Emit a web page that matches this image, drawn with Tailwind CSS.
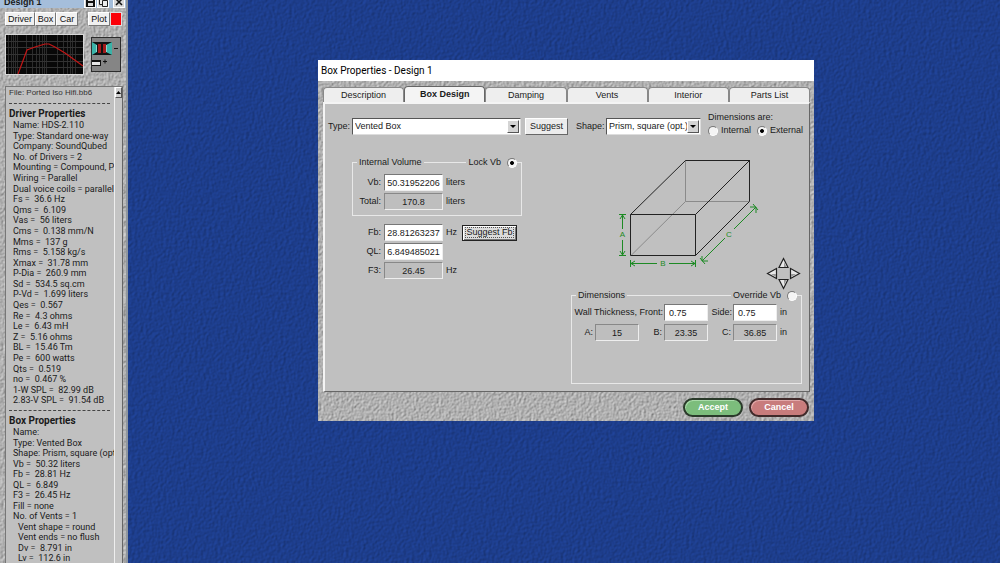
<!DOCTYPE html>
<html lang="en">
<head>
    <meta charset="UTF-8">
    <meta name="viewport" content="width=device-width, initial-scale=1.0">
    <title>Box Properties - Design 1</title>
    <script src="https://cdn.jsdelivr.net/npm/@tailwindcss/browser@4"></script>
</head>
<body class="relative flex h-screen overflow-hidden bg-[#1c3c88] font-['Liberation_Sans',Arial,sans-serif] text-[9px] leading-[11px] text-[#1a1a1a]">
    <!-- Texture filters -->
    <svg class="absolute w-0 h-0" aria-hidden="true">
        <filter id="stone" x="0" y="0" width="100%" height="100%" color-interpolation-filters="sRGB">
            <feTurbulence type="fractalNoise" baseFrequency="0.4" numOctaves="3" seed="4"/>
            <feDiffuseLighting surfaceScale="0.6" diffuseConstant="1" lighting-color="#e6e6e6">
                <feDistantLight azimuth="215" elevation="50"/>
            </feDiffuseLighting>
        </filter>
        <filter id="leather" x="0" y="0" width="100%" height="100%" color-interpolation-filters="sRGB">
            <feTurbulence type="fractalNoise" baseFrequency="0.35" numOctaves="2" seed="9"/>
            <feDiffuseLighting surfaceScale="0.4" diffuseConstant="1" lighting-color="#2650b6">
                <feDistantLight azimuth="215" elevation="50"/>
            </feDiffuseLighting>
        </filter>
    </svg>

    <!-- Design sidebar -->
    <aside class="relative z-10 w-[128px] shrink-0 h-full flex flex-col bg-[#b0b0b0] border-r-2 border-[#8f969f] overflow-hidden">
        <svg class="absolute inset-0 w-full h-full" aria-hidden="true"><rect width="100%" height="100%" filter="url(#stone)"/></svg>

        <header class="relative h-[8px] shrink-0 flex items-end justify-between pl-1 pr-px bg-[#a5bedb]">
            <h1 class="font-bold text-[9px] leading-[11px]">Design 1</h1>
            <div class="flex gap-px">
                <button aria-label="Save" class="w-[12px] h-[12px] bg-[#d8d8d8] border border-white flex items-center justify-center">
                    <svg class="w-[9px] h-[9px]" viewBox="0 0 9 9"><path d="M0 0h8l1 1v8H0z" fill="#111"/><path d="M2 0h5v3H2zM2 5h5v3H2z" fill="#ddd"/></svg>
                </button>
                <button aria-label="Copy" class="w-[12px] h-[12px] bg-[#d8d8d8] border border-white flex items-center justify-center">
                    <svg class="w-[9px] h-[9px]" viewBox="0 0 9 9" fill="#eee" stroke="#222"><path d="M.5.5h4v6h-4z"/><path d="M3.5 2.5h5v6h-5z"/></svg>
                </button>
                <button aria-label="Close" class="w-[12px] h-[12px] ml-[3px] bg-[#d8d8d8] border border-white flex items-center justify-center">
                    <svg class="w-[8px] h-[8px]" viewBox="0 0 8 8" stroke="#111" stroke-width="1.5"><path d="M1 1l6 6M7 1L1 7"/></svg>
                </button>
            </div>
        </header>

        <div class="relative flex mt-1 ml-[5px] text-[#111]">
            <button class="w-[30px] h-[14px] bg-[#f0f0f0] border border-t-white border-l-white border-r-[#777] border-b-[#777]">Driver</button>
            <button class="w-[21px] h-[14px] bg-[#f0f0f0] border border-t-white border-l-white border-r-[#777] border-b-[#777]">Box</button>
            <button class="w-[22px] h-[14px] bg-[#f0f0f0] border border-t-white border-l-white border-r-[#777] border-b-[#777]">Car</button>
            <button class="w-[22px] h-[14px] ml-2.5 bg-[#f0f0f0] border border-t-white border-l-white border-r-[#777] border-b-[#777]">Plot</button>
            <button aria-label="Plot color" class="w-[12px] h-[14px] bg-[#fb0008] border border-[#ddd]"></button>
        </div>

        <div class="relative flex items-center gap-[7px] mt-2 ml-[5px]">
            <svg class="w-[79px] h-[41px]" viewBox="0 0 79 41">
                <rect width="79" height="41" fill="#d8d8d8"/>
                <rect x="1" y="1" width="77" height="39" fill="#080808"/>
                <path d="M3.500 1v39M6.500 1v39M8.500 1v39M10.500 1v39M12.500 1v39M21.500 1v39M27.500 1v39M31.500 1v39M34.500 1v39M37.500 1v39M39.500 1v39M41.500 1v39M52.500 1v39M58.500 1v39M62.500 1v39M65.500 1v39M67.500 1v39M70.500 1v39" stroke="#2c2c2c"/>
                <path d="M1 7.500h77M1 13.500h77M1 20.500h77M1 27.500h77M1 33.500h77" stroke="#333"/>
                <path d="M13 40L22 16l8-3 10-3h4l6 3 10 6 18 13" fill="none" stroke="#c41616" stroke-width="1.200"/>
            </svg>
            <svg class="w-[30px] h-[35px]" viewBox="0 0 30 35">
                <rect x=".5" y=".5" width="29" height="34" fill="#858585" stroke="#2c2c2c"/>
                <path d="M1 5h20v13H1z" fill="#111"/>
                <path d="M1 5l5 3v7l-5 3zM21 5l-6 3v7l6 3z" fill="#3bb3a8"/>
                <path d="M5 8h1v7H5zM15 8h1v7h-1z" fill="#8fd6cf"/>
                <path d="M7 7h3v9H7zM12 7h3v9h-3z" fill="#a11a1a"/>
                <path d="M1 23h9v6H1z" fill="#111"/>
                <path d="M1 25h8v3H1z" fill="#e6e6e6"/>
                <path d="M23 11.500h4M12 24.500h4M14 22.500v4" stroke="#111"/>
            </svg>
        </div>

        <div class="relative flex-1 min-h-0 flex mt-[11px] ml-[5px] mr-[3px] bg-[#c0c0c0] border-t border-l border-[#777]">
            <div class="flex-1 min-w-0 pl-[3px] overflow-hidden whitespace-nowrap font-[Roboto,'Liberation_Sans',sans-serif]">
                <p class="text-[8px] leading-[12px] text-[#333] font-['Liberation_Sans',Arial,sans-serif]">File: Ported Iso Hifi.bb6</p>
                <div class="border-t border-dashed border-[#444] mt-1 mr-1"></div>
                <h2 class="mt-1 text-[10px] leading-[12px] font-bold">Driver Properties</h2>
                <ul class="grid auto-rows-fr h-[286px] pl-[4px] leading-[10px] whitespace-pre">
                    <li>Name: HDS-2.110</li>
                    <li>Type: Standard one-way</li>
                    <li>Company: SoundQubed</li>
                    <li>No. of Drivers = 2</li>
                    <li>Mounting = Compound, P</li>
                    <li>Wiring = Parallel</li>
                    <li>Dual voice coils = parallel</li>
                    <li>Fs =  36.6 Hz</li>
                    <li>Qms =  6.109</li>
                    <li>Vas =  56 liters</li>
                    <li>Cms =  0.138 mm/N</li>
                    <li>Mms =  137 g</li>
                    <li>Rms =  5.158 kg/s</li>
                    <li>Xmax =  31.78 mm</li>
                    <li>P-Dia =  260.9 mm</li>
                    <li>Sd =  534.5 sq.cm</li>
                    <li>P-Vd =  1.699 liters</li>
                    <li>Qes =  0.567</li>
                    <li>Re =  4.3 ohms</li>
                    <li>Le =  6.43 mH</li>
                    <li>Z =  5.16 ohms</li>
                    <li>BL =  15.46 Tm</li>
                    <li>Pe =  600 watts</li>
                    <li>Qts =  0.519</li>
                    <li>no =  0.467 %</li>
                    <li>1-W SPL =  82.99 dB</li>
                    <li>2.83-V SPL =  91.54 dB</li>
                </ul>
                <div class="border-t border-dashed border-[#444] mt-1 mr-1"></div>
                <h2 class="mt-1 text-[10px] leading-[12px] font-bold">Box Properties</h2>
                <ul class="grid auto-rows-fr h-[137px] pl-[4px] leading-[10px] whitespace-pre">
                    <li>Name:</li>
                    <li>Type: Vented Box</li>
                    <li>Shape: Prism, square (opt</li>
                    <li>Vb =  50.32 liters</li>
                    <li>Fb =  28.81 Hz</li>
                    <li>QL =  6.849</li>
                    <li>F3 =  26.45 Hz</li>
                    <li>Fill = none</li>
                    <li>No. of Vents = 1</li>
                    <li class="pl-[5px]">Vent shape = round</li>
                    <li class="pl-[5px]">Vent ends = no flush</li>
                    <li class="pl-[5px]">Dv =  8.791 in</li>
                    <li class="pl-[5px]">Lv =  112.6 in</li>
                </ul>
            </div>
            <div class="w-[9px] shrink-0 bg-[#c4c4c4] border-l border-[#eee] border-r border-r-[#666]">
                <button aria-label="Scroll up" class="w-full h-[11px] bg-[#d0d0d0] border border-t-white border-l-white border-r-[#555] border-b-[#555] flex items-center justify-center">
                    <svg class="w-[5px] h-[3px]" viewBox="0 0 5 3"><path d="M0 3L2.500 0 5 3z" fill="#000"/></svg>
                </button>
            </div>
        </div>
    </aside>

    <!-- Desktop -->
    <main class="relative flex-1">
        <svg class="absolute inset-0 w-full h-full" aria-hidden="true"><rect width="100%" height="100%" filter="url(#leather)"/></svg>

        <!-- Box properties window -->
        <section class="absolute left-[190px] top-[60px] w-[496px] bg-[#b0b0b0]">
            <h2 class="relative z-10 h-[21px] pl-[3px] bg-white font-[Roboto,'Open_Sans',sans-serif] text-[10px] leading-[21px] text-black">Box Properties - Design 1</h2>
            <svg class="absolute inset-0 w-full h-full" aria-hidden="true"><rect width="100%" height="100%" filter="url(#stone)"/></svg>

            <div class="relative pl-[5px] pr-1 pt-[5px] pb-1">
                <nav class="flex items-end h-[16px] text-center">
                    <button class="flex-1 h-[15px] bg-[#eee] border border-b-0 border-[#888] rounded-t-[4px]">Description</button>
                    <button class="flex-1 h-[16px] bg-[#f4f4f4] border border-b-0 border-[#666] rounded-t-[4px] font-bold">Box Design</button>
                    <button class="flex-1 h-[15px] bg-[#eee] border border-b-0 border-[#888] rounded-t-[4px]">Damping</button>
                    <button class="flex-1 h-[15px] bg-[#eee] border border-b-0 border-[#888] rounded-t-[4px]">Vents</button>
                    <button class="flex-1 h-[15px] bg-[#eee] border border-b-0 border-[#888] rounded-t-[4px]">Interior</button>
                    <button class="flex-1 h-[15px] bg-[#eee] border border-b-0 border-[#888] rounded-t-[4px]">Parts List</button>
                </nav>

                <div class="bg-[#c0c0c0] border-l-2 border-t-2 border-[#f4f4f4] border-r border-b border-r-[#666] border-b-[#666]">
                    <!-- Type and shape -->
                    <div class="flex items-center h-[36px] pl-[3px] pt-2">
                        <label for="type" class="w-[24px]">Type:</label>
                        <div class="relative w-[169px] h-[17px]">
                            <select id="type" class="appearance-none w-full h-full pl-[2px] bg-white border border-t-[#555] border-l-[#555] border-r-[#ddd] border-b-[#ddd]"><option>Vented Box</option></select>
                            <span class="absolute right-[2px] top-[2px] w-[12px] h-[13px] bg-[#d4d4d4] border border-t-white border-l-white border-r-[#555] border-b-[#555] flex items-center justify-center pointer-events-none">
                                <svg class="w-[6px] h-[3px]" viewBox="0 0 6 3"><path d="M0 0h6L3 3z"/></svg>
                            </span>
                        </div>
                        <button class="w-[43px] h-[17px] ml-1 bg-[#ececec] border border-t-white border-l-white border-r-[#666] border-b-[#666]">Suggest</button>
                        <label for="shape" class="w-[30px] ml-2">Shape:</label>
                        <div class="relative w-[95px] h-[17px]">
                            <select id="shape" class="appearance-none w-full h-full pl-[2px] bg-white border border-t-[#555] border-l-[#555] border-r-[#ddd] border-b-[#ddd]"><option>Prism, square (opt.)</option></select>
                            <span class="absolute right-[2px] top-[2px] w-[12px] h-[13px] bg-[#d4d4d4] border border-t-white border-l-white border-r-[#555] border-b-[#555] flex items-center justify-center pointer-events-none">
                                <svg class="w-[6px] h-[3px]" viewBox="0 0 6 3"><path d="M0 0h6L3 3z"/></svg>
                            </span>
                        </div>
                        <div role="radiogroup" aria-label="Dimensions are" class="ml-[7px] -mt-1">
                            <p>Dimensions are:</p>
                            <div class="flex gap-1 mt-0.5">
                                <label class="flex items-center gap-[3px] w-[45px]"><input type="radio" name="dims" class="appearance-none w-[10px] h-[10px] rounded-full bg-[#f4f4f4] border border-t-[#777] border-l-[#777] border-r-white border-b-white checked:bg-radial checked:from-black checked:from-25% checked:to-[#f4f4f4] checked:to-40%">Internal</label>
                                <label class="flex items-center gap-[3px]"><input type="radio" name="dims" checked class="appearance-none w-[10px] h-[10px] rounded-full bg-[#f4f4f4] border border-t-[#777] border-l-[#777] border-r-white border-b-white checked:bg-radial checked:from-black checked:from-25% checked:to-[#f4f4f4] checked:to-40%">External</label>
                            </div>
                        </div>
                    </div>

                    <div class="flex justify-between pt-[10px] pb-[7px] pr-[7px]">
                        <!-- Volume and tuning -->
                        <div class="w-[170px] ml-[27px] mt-[7px]">
                            <fieldset class="relative grid gap-[2px] border border-[#e8e8e8] pb-[5px]">
                                <legend class="ml-1 px-[2px]">Internal Volume</legend>
                                <label class="absolute right-1 -top-[11px] flex items-center gap-[6px] bg-[#c0c0c0] pl-[2px]">Lock Vb<input type="radio" name="lock" checked class="appearance-none w-[10px] h-[10px] rounded-full bg-[#f4f4f4] border border-t-[#777] border-l-[#777] border-r-white border-b-white checked:bg-radial checked:from-black checked:from-25% checked:to-[#f4f4f4] checked:to-40%"></label>
                                <div class="flex items-center mt-[6px]">
                                    <label for="vb" class="w-[31px] pr-[3px] text-right">Vb:</label>
                                    <input id="vb" value="50.31952206" class="w-[59px] h-[17px] text-center bg-white border border-t-[#777] border-l-[#777] border-r-[#eee] border-b-[#eee]">
                                    <span class="ml-[3px]">liters</span>
                                </div>
                                <div class="flex items-center">
                                    <label for="total" class="w-[31px] pr-[3px] text-right">Total:</label>
                                    <input id="total" value="170.8" readonly class="w-[59px] h-[17px] text-center bg-[#bebebe] border border-t-[#888] border-l-[#888] border-r-[#eee] border-b-[#eee]">
                                    <span class="ml-[3px]">liters</span>
                                </div>
                            </fieldset>
                            <div class="grid gap-[2px] mt-2 pl-px">
                                <div class="flex items-center">
                                    <label for="fb" class="w-[31px] pr-[3px] text-right">Fb:</label>
                                    <input id="fb" value="28.81263237" class="w-[59px] h-[17px] text-center bg-white border border-t-[#777] border-l-[#777] border-r-[#eee] border-b-[#eee]">
                                    <span class="w-[16px] ml-[3px]">Hz</span>
                                    <button class="w-[55px] h-[16px] flex items-center justify-center bg-[#dcdcdc] border border-[#222] shadow-[inset_1px_1px_#fff,inset_-1px_-1px_#777]"><span class="border border-dotted border-[#555] leading-[9px]">Suggest Fb</span></button>
                                </div>
                                <div class="flex items-center">
                                    <label for="ql" class="w-[31px] pr-[3px] text-right">QL:</label>
                                    <input id="ql" value="6.849485021" class="w-[59px] h-[17px] text-center bg-white border border-t-[#777] border-l-[#777] border-r-[#eee] border-b-[#eee]">
                                </div>
                                <div class="flex items-center">
                                    <label for="f3" class="w-[31px] pr-[3px] text-right">F3:</label>
                                    <input id="f3" value="26.45" readonly class="w-[59px] h-[17px] text-center bg-[#bebebe] border border-t-[#888] border-l-[#888] border-r-[#eee] border-b-[#eee]">
                                    <span class="ml-[3px]">Hz</span>
                                </div>
                            </div>
                        </div>

                        <!-- Box drawing and dimensions -->
                        <div class="w-[231px]">
                            <div class="flex items-end justify-between pl-[41px] pr-px">
                                <svg class="w-[150px] h-[140px]" viewBox="612 150 150 140" fill="none">
                                    <path d="M631 255.500L685.500 201.500H749M685.500 160v41.500" stroke="#8a8a8a"/>
                                    <path d="M630.500 214.500h65v41h-65zM630.500 214.500L685.500 160.500h64l-54 54M749.500 160v41.500l-54 54" stroke="#222"/>
                                    <g stroke="#1d8a24">
                                        <path d="M619 214.500h7M619 255.500h7M622.500 215v14M622.500 240v15M620 219l2.500-4 2.500 4M620 251l2.500 4 2.500-4"/>
                                        <path d="M630.500 260v7M695.500 260v7M631 263.500h26M669 263.500h26M635 261l-4 2.500 4 2.500M691 261l4 2.500-4 2.500"/>
                                        <path d="M702 261l23-23M734 229l22-22M700 258l5 6M753 204l5 6M702 256v5h6M750 207h6v6"/>
                                    </g>
                                    <g fill="#1d8a24" font-size="8" text-anchor="middle">
                                        <text x="622.500" y="237">A</text>
                                        <text x="663" y="266">B</text>
                                        <text x="729" y="237">C</text>
                                    </g>
                                </svg>
                                <button aria-label="Rotate view">
                                    <svg class="w-[35px] h-[33px]" viewBox="0 0 35 33" fill="#e8e8e8" stroke="#222" stroke-width="1.200">
                                        <path d="M17.500 1.500l4.500 9h-9zM17.500 31.500l4.500-9h-9zM1.500 16.500l9-5v10zM33.500 16.500l-9-5v10z"/>
                                        <path d="M18 5l2.500 5H18zM18 23h2.500L18 28zM10 17v3l-5-3zM25 17h5l-5 3z" fill="#999" stroke="none"/>
                                    </svg>
                                </button>
                            </div>
                            <fieldset class="relative grid gap-[3px] border border-[#e8e8e8] pb-[42px]">
                                <legend class="ml-1 px-[2px]">Dimensions</legend>
                                <label class="absolute right-1 -top-[11px] flex items-center gap-[6px] bg-[#c0c0c0] pl-[2px]">Override Vb<input type="radio" name="override" class="appearance-none w-[10px] h-[10px] rounded-full bg-[#f4f4f4] border border-t-[#777] border-l-[#777] border-r-white border-b-white"></label>
                                <div class="flex items-center mt-[3px]">
                                    <label for="front" class="w-[92px] pr-px text-right">Wall Thickness, Front:</label>
                                    <input id="front" value="0.75" class="w-[44px] h-[17px] pl-1 bg-white border border-t-[#777] border-l-[#777] border-r-[#eee] border-b-[#eee]">
                                    <label for="side" class="w-[25px] pr-px text-right">Side:</label>
                                    <input id="side" value="0.75" class="w-[44px] h-[17px] pl-1 bg-white border border-t-[#777] border-l-[#777] border-r-[#eee] border-b-[#eee]">
                                    <span class="ml-[3px]">in</span>
                                </div>
                                <div class="flex items-center">
                                    <label for="a" class="w-[23px] pr-[2px] text-right">A:</label>
                                    <input id="a" value="15" readonly class="w-[44px] h-[17px] text-center bg-[#bebebe] border border-t-[#888] border-l-[#888] border-r-[#eee] border-b-[#eee]">
                                    <label for="b" class="w-[25px] pr-[2px] text-right">B:</label>
                                    <input id="b" value="23.35" readonly class="w-[44px] h-[17px] text-center bg-[#bebebe] border border-t-[#888] border-l-[#888] border-r-[#eee] border-b-[#eee]">
                                    <label for="c" class="w-[25px] pr-[2px] text-right">C:</label>
                                    <input id="c" value="36.85" readonly class="w-[44px] h-[17px] text-center bg-[#bebebe] border border-t-[#888] border-l-[#888] border-r-[#eee] border-b-[#eee]">
                                    <span class="ml-[3px]">in</span>
                                </div>
                            </fieldset>
                        </div>
                    </div>
                </div>

                <div class="flex justify-end gap-[6px] pt-[6px] pr-px">
                    <button class="w-[60px] h-[19px] rounded-full bg-[#7cbd7c] border-2 border-[#2a3a2a] font-bold text-white shadow-[inset_1px_1px_#a9dba9]">Accept</button>
                    <button class="w-[60px] h-[19px] rounded-full bg-[#c87c7c] border-2 border-[#402a2a] font-bold text-white shadow-[inset_1px_1px_#e2a9a9]">Cancel</button>
                </div>
            </div>
        </section>
    </main>
</body>
</html>
